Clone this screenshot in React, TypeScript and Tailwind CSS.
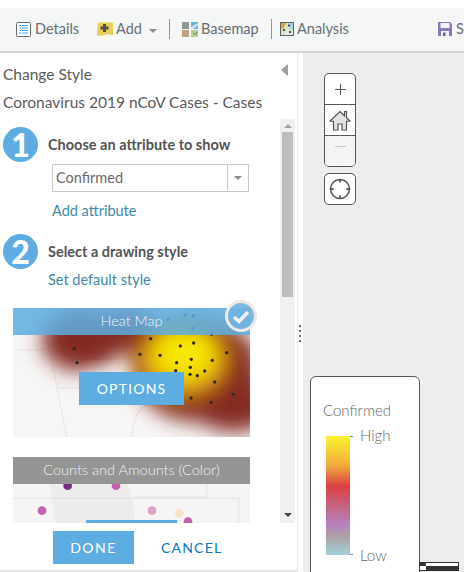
import React from 'react';
import { Plus, Minus } from 'lucide-react';

const font = { fontFamily: 'Lato, "Open Sans", sans-serif' };

function DetailsIcon() {
  return (
    <svg className="shrink-0" width="15" height="15" viewBox="0 0 15 15" fill="none">
      <rect x="0.5" y="0.5" width="14" height="14" rx="1" fill="#fff" stroke="#5f6b70" />
      <path d="M3 3.5h2M6 3.5h6M4 6h1M6 6h6M4 8.5h1M6 8.5h6M3 11h2M6 11h6" stroke="#4aa5e0" strokeWidth="1.2" />
    </svg>
  );
}

function AddIcon() {
  return (
    <svg className="block" width="16" height="16" viewBox="0 0 16 16">
      <path d="M1 1.500h15v12.500l-5-.8-4 1-7 .8z" fill="#e5cf55" />
      <path d="M6 3h3v2.500h2.500v3H9V11H6V8.500H3.500v-3H6z" fill="#55524a" />
    </svg>
  );
}

function BasemapIcon() {
  return (
    <svg className="block" width="16" height="15" viewBox="0 0 16 15">
      <rect x="0" y="0" width="7" height="7" fill="#8f9794" />
      <rect x="9" y="0" width="7" height="7" fill="#6db4dc" />
      <rect x="0" y="8" width="7" height="7" fill="#c0a27e" />
      <rect x="9" y="8" width="7" height="7" fill="#b8cf96" />
      <path d="M9 5l7-4v2l-5 4H9z" fill="#d7e7ee" />
      <path d="M11 11l2 2 2-3" stroke="#5d8f5b" fill="none" />
    </svg>
  );
}

function AnalysisIcon() {
  return (
    <svg className="block" width="14" height="14" viewBox="0 0 14 14">
      <rect x="0.5" y="0.500" width="13" height="13" fill="#d7e7c4" stroke="#5c6466" />
      <path d="M1 1h5l-2 5-3 1z" fill="#e0a24f" />
      <path d="M8 1h5v7l-4-2z" fill="#a9d4e8" />
      <path d="M5 13l2-5 6 2v3z" fill="#e8eef0" />
      <circle cx="4" cy="8" r="1.100" fill="#333" />
      <circle cx="10" cy="10" r="1.100" fill="#333" />
      <circle cx="9" cy="3.500" r="1.100" fill="#333" />
    </svg>
  );
}

function SaveIcon() {
  return (
    <svg className="block" width="14" height="14" viewBox="0 0 14 14">
      <path d="M0 0h12l2 2v12H0z" fill="#8a78b8" />
      <rect x="2.500" y="1" width="9" height="5" fill="#f5f3fa" />
      <rect x="3" y="9" width="8" height="5" fill="#f5f3fa" />
      <rect x="5" y="10.500" width="2.500" height="3.500" fill="#6a5a98" />
    </svg>
  );
}

function Step({ n }: { n: number }) {
  return (
    <div className="flex h-[35px] w-[35px] shrink-0 items-center justify-center rounded-full bg-[#5dade2] text-[32px] font-black leading-none text-white">
      {n}
    </div>
  );
}

// carte heat map, coordonnees relevees sur le zoom x3
function HeatMap() {
  const dots = [
    [223, 161], [231, 203], [452, 131], [541, 153], [581, 144], [420, 178], [480, 181], [530, 203], [574, 193], [637, 196],
    [680, 173], [571, 217], [527, 227], [570, 238], [592, 242], [614, 228], [644, 261], [700, 298], [573, 309], [633, 322],
    [505, 72], [555, 60], [580, 62], [578, 100], [635, 118],
  ];
  return (
    <svg className="block h-[129px] w-[237px]" viewBox="39 39 711 387" preserveAspectRatio="none">
      <defs>
        <filter id="b1" x="-50%" y="-50%" width="200%" height="200%"><feGaussianBlur stdDeviation="30" /></filter>
        <filter id="b2" x="-50%" y="-50%" width="200%" height="200%"><feGaussianBlur stdDeviation="34" /></filter>
        <clipPath id="c1"><rect x="39" y="39" width="711" height="387" /></clipPath>
      </defs>
      <g clipPath="url(#c1)">
        <rect x="39" y="39" width="711" height="387" fill="#f7f6f6" />
        <path d="M39 164h100M140 120l60 306M175 278h240M395 426q5-70 40-95h110M390 120l20 60 40 30M410 164h340M630 120v40M722 164v100" stroke="#e6e4e4" strokeWidth="3" fill="none" />
        <g fill="#842a20" filter="url(#b1)">
          <ellipse cx="245" cy="135" rx="120" ry="95" />
          <ellipse cx="380" cy="110" rx="100" ry="70" />
          <ellipse cx="590" cy="225" rx="190" ry="155" />
          <ellipse cx="700" cy="330" rx="125" ry="80" />
        </g>
        <ellipse cx="310" cy="265" rx="70" ry="35" fill="#f6eeee" opacity="0.8" filter="url(#b1)" />
        <g filter="url(#b2)">
          <ellipse cx="550" cy="195" rx="140" ry="115" fill="#e0a808" />
          <ellipse cx="555" cy="170" rx="95" ry="85" fill="#f8e800" />
        </g>
        {dots.map(([x, y]) => (
          <circle key={`${x}-${y}`} cx={x} cy={y} r="5" fill="#2b2b2b" />
        ))}
      </g>
    </svg>
  );
}

function CountsMap() {
  const dots = [
    [203, 122, '#7d2c84'], [348, 122, '#c75fae'], [126, 197, '#c563b0'], [456, 197, '#dfa3c6'], [538, 205, '#f6e3c6'], [564, 230, '#c060a8'],
  ] as const;
  return (
    <svg className="block h-[66px] w-[237px]" viewBox="39 36 711 198" preserveAspectRatio="none">
      <rect x="39" y="36" width="711" height="198" fill="#f5f5f5" />
      <path d="M140 36l25 198h240l-5-60-20-70-10-70z" fill="#ececec" />
      <path d="M620 36v120H400M39 160h680M716 160v74" stroke="#e2e2e2" strokeWidth="3" fill="none" />
      {dots.map(([x, y, c]) => (
        <circle key={`${x}-${y}`} cx={x} cy={y} r="13" fill={c} />
      ))}
    </svg>
  );
}

export default function App() {
  return (
    <div className="flex h-[572px] w-[464px] flex-col overflow-hidden bg-white pt-2 text-[#5c5c5c]" style={font}>
      {/* Barre d'outils */}
      <div className="flex h-[45px] shrink-0 items-center overflow-hidden whitespace-nowrap border-b-2 border-[#d4d6d6] bg-[#f5f7f7] pb-[1px] pl-4 text-[14.500px] text-[#666e72] [&>*]:shrink-0">
        <DetailsIcon />
        <span className="ml-1 w-[62px] leading-none">Details</span>
        <AddIcon />
        <span className="ml-[3px] w-[27px] leading-none">Add</span>
        <span className="ml-[6px] mt-[3px] h-0 w-0 border-x-[4px] border-t-[4px] border-x-transparent border-t-[#8a8a8a]" />
        <span className="ml-3 h-5 w-px bg-[#8f9496]" />
        <span className="ml-3"><BasemapIcon /></span>
        <span className="ml-[3px] w-[70px] leading-none">Basemap</span>
        <span className="h-5 w-px bg-[#8f9496]" />
        <span className="ml-2"><AnalysisIcon /></span>
        <span className="ml-[3px] w-[141px] leading-none">Analysis</span>
        <SaveIcon />
        <span className="ml-1 leading-none">Save</span>
      </div>

      <div className="flex min-h-0 flex-1">
        {/* Panneau gauche */}
        <div className="flex w-[303px] shrink-0">
          <div className="flex w-[297.5px] shrink-0 flex-col border-r border-[#e6e6e6]">
            <div className="relative h-[66px] shrink-0 pl-[3px] pt-[11px] text-[15.500px] leading-[20px] text-[#5a5a5a]">
              <div>Change Style</div>
              <div className="mt-2 whitespace-nowrap">Coronavirus 2019 nCoV Cases - Cases</div>
              <span className="absolute left-[281px] top-[11px] h-0 w-0 border-y-[6px] border-r-[7px] border-y-transparent border-r-[#a0a0a0]" />
            </div>

            <div className="flex h-[404px] shrink-0">
              <div className="w-[280px] shrink-0 overflow-hidden">
                <div className="flex items-center gap-[10px] pl-[3px] pt-2">
                  <Step n={1} />
                  <div className="pt-[2px] text-[14.500px] font-bold leading-none text-[#545454]">Choose an attribute to show</div>
                </div>
                <div className="ml-[52px] mt-[2px] flex h-[28px] w-[197px] items-center border border-[#c9c9c9] pb-[1px] text-[14.500px] text-[#6a6a6a]">
                  <span className="flex-1 pl-[3px]">Confirmed</span>
                  <span className="flex h-full w-[21px] items-center justify-center border-l border-[#c9c9c9]">
                    <span className="h-0 w-0 border-x-[4px] border-t-[4px] border-x-transparent border-t-[#8d8d8d]" />
                  </span>
                </div>
                <div className="ml-[52px] mt-[10px] text-[14.500px] leading-[18px] text-[#3f88aa]">Add attribute</div>
                <div className="mt-[14px] flex items-center gap-[10px] pl-[3px]">
                  <Step n={2} />
                  <div className="pt-[2px] text-[14.500px] font-bold leading-none text-[#545454]">Select a drawing style</div>
                </div>
                <div className="ml-[48px] mt-[2px] text-[14.500px] leading-[18px] text-[#3f88aa]">Set default style</div>

                {/* Styles */}
                <div className="relative ml-[13px] mt-[19px] w-[237px]">
                  <HeatMap />
                  <div className="absolute inset-x-0 top-0 flex h-[27px] items-center justify-center bg-[#5dade2]/85 pb-[1px] text-[14.500px] font-light text-[#eef3f6]">
                    Heat Map
                  </div>
                  <div className="absolute left-[66px] top-[64px] flex h-[33px] w-[105px] items-center justify-center bg-[#5dade2] text-[14px] tracking-[1.200px] text-white">
                    OPTIONS
                  </div>
                  <div className="absolute left-[212px] top-[-8px] flex h-[32px] w-[32px] items-center justify-center rounded-full border-[3px] border-[#f0e9e4] bg-[#6fb3e0]/90">
                    <svg width="18" height="15" viewBox="0 0 18 15">
                      <path d="M2 8l5 4.500L16 3" stroke="#f2efec" strokeWidth="3.500" fill="none" />
                    </svg>
                  </div>
                </div>
                <div className="relative ml-[13px] mt-[20px] h-[66px] w-[237px] overflow-hidden">
                  <CountsMap />
                  <div className="absolute inset-x-0 top-0 flex h-[27px] items-center justify-center bg-[#959595] pb-[1px] text-[14.500px] font-light text-[#f0f0f0]">
                    Counts and Amounts (Color)
                  </div>
                  <div className="absolute bottom-0 left-[73px] h-[3px] w-[91px] bg-[#5dade2]" />
                </div>
              </div>

              {/* Ascenseur */}
              <div className="flex w-[15px] shrink-0 flex-col items-center bg-[#f0f0f0]">
                <div className="flex h-[13px] shrink-0 items-center justify-center">
                  <span className="h-0 w-0 border-x-[4px] border-b-[4px] border-x-transparent border-b-[#a3a3a3]" />
                </div>
                <div className="h-[165px] w-[11px] bg-[#bdbdbd]" />
                <div className="flex-1" />
                <div className="flex h-[16px] shrink-0 items-center justify-center">
                  <span className="h-0 w-0 border-x-[4px] border-t-[4px] border-x-transparent border-t-[#444]" />
                </div>
              </div>
            </div>

            <div className="flex flex-1 items-start border-b-2 border-[#e4e4e4] pl-[53px] pt-2">
              <div className="flex h-[33px] w-[81px] items-center justify-center bg-[#5dade2] text-[14px] tracking-[1.500px] text-white">
                DONE
              </div>
              <div className="ml-[27px] flex h-[33px] items-center text-[14px] tracking-[1.200px] text-[#0079c1]">
                CANCEL
              </div>
            </div>
          </div>
          <div className="flex flex-1 flex-col items-center justify-start gap-[3px] pt-[272px]">
            {[0, 1, 2, 3].map((i) => (
              <span key={i} className="h-[2px] w-[2px] bg-[#666]" />
            ))}
          </div>
        </div>

        {/* Carte */}
        <div className="relative min-w-0 flex-1 bg-[#ededed]">
          <div className="absolute left-[21px] top-[20px] flex h-[94px] w-[32px] flex-col overflow-hidden rounded-[5px] border border-[#555] bg-white">
            <div className="flex h-[31px] shrink-0 items-center justify-center border-b border-[#555] text-[#555]">
              <Plus size={17} strokeWidth={1.500} />
            </div>
            <div className="flex h-[31px] shrink-0 items-center justify-center border-b border-[#555]">
              <svg width="22" height="21" viewBox="0 0 22 21" fill="#e2e2e2" stroke="#555" strokeWidth="1.200">
                <path d="M1 11L11 1.500l4.500 4.300V1.500h2v6.200L21 11l-3.500.3V20H13v-6H9v6H4.500v-8.700z" />
              </svg>
            </div>
            <div className="flex flex-1 justify-center bg-[#f4f4f4] pt-[2px] text-[#c4c4c4]">
              <Minus size={17} strokeWidth={1.500} />
            </div>
          </div>
          <div className="absolute left-[21px] top-[120px] flex h-[32px] w-[32px] items-center justify-center rounded-[5px] border border-[#555] bg-white">
            <svg width="22" height="22" viewBox="0 0 22 22" fill="none" stroke="#555">
              <circle cx="11" cy="11" r="9.500" strokeWidth="1.500" />
              <path d="M11 1v3.500M11 17.500V21M1 11h3.500M17.500 11H21" strokeWidth="1.800" />
            </svg>
          </div>

          {/* Legende */}
          <div className="absolute left-[7px] top-[323px] h-[220px] w-[110px] rounded-[6px] border border-[#555] bg-white pl-[12px] pt-[23px] text-[15px] font-light text-[#666]">
            <div className="leading-[20px]">Confirmed</div>
            <div className="mt-[16px] flex">
              <div className="ml-[3px] h-[119px] w-[24px] bg-[linear-gradient(to_bottom,#fdf52f_0%,#f0a93c_25%,#db4040_42%,#c0709a_65%,#b483bd_75%,#ab9fa4_84%,#a3d2da_100%)]" />
              <div className="relative flex-1">
                <span className="absolute left-0 top-0 h-px w-[3px] bg-[#888]" />
                <span className="absolute bottom-0 left-0 h-px w-[3px] bg-[#888]" />
                <span className="absolute left-[10px] top-[-11px] leading-[20px]">High</span>
                <span className="absolute bottom-[-10px] left-[10px] leading-[20px]">Low</span>
              </div>
            </div>
          </div>

          {/* Echelle */}
          <div className="absolute left-[116px] top-[509px] flex h-[9px] w-[40px] flex-col border border-[#333] bg-white">
            <div className="flex h-[3px]"><span className="w-[6px] bg-[#333]" /></div>
            <div className="flex h-[4px]"><span className="w-[6px]" /><span className="flex-1 bg-[#333]" /></div>
          </div>
        </div>
      </div>
    </div>
  );
}
